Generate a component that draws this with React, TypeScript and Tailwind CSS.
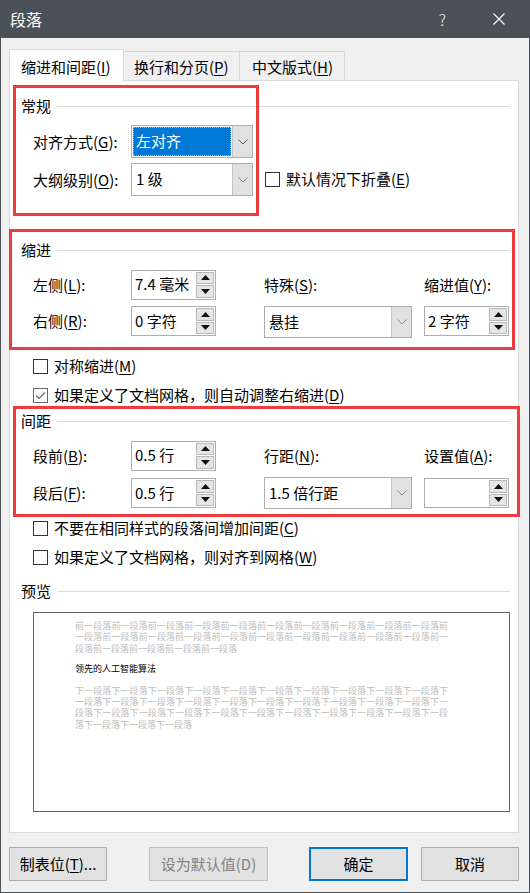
import type { ReactNode } from 'react';

const FONT = "font-['Noto_Sans_CJK_SC','Noto_Sans',sans-serif]";

const PREV_TEXT = '前一段落'.repeat(25);
const NEXT_TEXT = '下一段落'.repeat(34);

function Key({ k }: { k: string }) {
  return <u className="underline-offset-[2px]">{k}</u>;
}

function Chevron({ color = '#555' }: { color?: string }) {
  return (
    <svg width="10" height="6" viewBox="0 0 10 6">
      <path d="M0.5 0.5 L5 5 L9.5 0.5" fill="none" stroke={color} strokeWidth="1" />
    </svg>
  );
}

function Arrow({ up }: { up?: boolean }) {
  return (
    <svg width="9" height="5" viewBox="0 0 9 5">
      {up ? <path d="M0 5 L4.5 0 L9 5 Z" fill="#111" /> : <path d="M0 0 L4.5 5 L9 0 Z" fill="#111" />}
    </svg>
  );
}

function Combo({ value, size, selected }: { value: string; size: string; selected?: boolean }) {
  return (
    <div className={`flex border border-[#adadad] bg-white ${size}`}>
      <div className="flex-1 flex items-center p-[1px]">
        {selected ? (
          <div className="h-full w-full flex items-center bg-[#0078d7] text-white pl-[3px] outline-1 outline-dotted outline-[#f0a040] -outline-offset-1">
            {value}
          </div>
        ) : (
          <span className="pl-[3px]">{value}</span>
        )}
      </div>
      <div className="w-[20px] bg-[#e1e1e1] border-l border-[#c4c4c4] flex items-center justify-center">
        <Chevron color={selected ? '#555' : '#888'} />
      </div>
    </div>
  );
}

function Spin({ value }: { value: string }) {
  return (
    <div className="flex h-[30px] w-[85px] border border-[#adadad] bg-white">
      <div className="flex-1 flex items-center pl-[3px]">{value}</div>
      <div className="w-[19px] flex flex-col gap-px py-px pr-px">
        <div className="flex-1 bg-[#e5e5e5] border border-[#b8b8b8] flex items-center justify-center">
          <Arrow up />
        </div>
        <div className="flex-1 bg-[#e5e5e5] border border-[#b8b8b8] flex items-center justify-center">
          <Arrow />
        </div>
      </div>
    </div>
  );
}

function Check({ checked, children }: { checked?: boolean; children: ReactNode }) {
  return (
    <div className="flex items-center h-[20px]">
      <span
        className={`w-[15px] h-[15px] border bg-white flex items-center justify-center ${
          checked ? 'border-[#6a6a6a]' : 'border-[#333]'
        }`}
      >
        {checked && (
          <svg width="13" height="13" viewBox="0 0 13 13">
            <path d="M2 6.5 L5 9.5 L11 3.5" fill="none" stroke="#666" strokeWidth="1.2" />
          </svg>
        )}
      </span>
      <span className="ml-[6px]">{children}</span>
    </div>
  );
}

function GroupHeader({ title, className = '' }: { title: string; className?: string }) {
  return (
    <div className={`flex items-center h-[20px] pl-[11px] pr-[8px] ${className}`}>
      <span className="leading-[20px]">{title}</span>
      <div className="flex-1 ml-[6px] h-px bg-[#dcdcdc]" />
    </div>
  );
}

function Label({ children, w = 'w-[98px]' }: { children: ReactNode; w?: string }) {
  return <div className={`${w} shrink-0 leading-[20px]`}>{children}</div>;
}

function Button({ children, variant }: { children: ReactNode; variant?: 'default' | 'disabled' }) {
  const border =
    variant === 'default'
      ? 'border-2 border-[#0078d7]'
      : variant === 'disabled'
        ? 'border border-[#bfbfbf] text-[#838383]'
        : 'border border-[#adadad]';
  return <div className={`h-[34px] bg-[#e1e1e1] flex items-center justify-center ${border}`}>{children}</div>;
}

export default function App() {
  return (
    <div className={`relative w-[530px] h-[893px] bg-[#f0f0f0] flex flex-col text-[15px] text-black ${FONT}`}>
      {/* Title bar */}
      <div className="h-[38px] bg-[#4a5157] flex items-center text-white shrink-0">
        <span className="ml-[10px] text-[16px] leading-none">段落</span>
        <span className="ml-auto text-[16px] leading-none font-light text-[#f2f2f2]">?</span>
        <svg className="ml-[47px] mr-[25px]" width="12" height="12" viewBox="0 0 12 12">
          <path d="M0.5 0.5 L11.5 11.5 M11.5 0.5 L0.5 11.5" stroke="#fff" strokeWidth="1.1" />
        </svg>
      </div>

      <div className="flex-1 flex flex-col border-x border-b border-[#4a5157]">
        {/* Tabs */}
        <div className="h-[42px] flex items-end pl-[8px] shrink-0">
          <div className="relative top-px z-10 w-[115px] h-[32px] bg-white border-x border-t border-[#d9d9d9] flex items-center pl-[11px] pt-[3px]">
            缩进和间距(<Key k="I" />)
          </div>
          <div className="w-[116px] h-[29px] border-t border-r border-[#d9d9d9] flex items-center pl-[10px] pt-[2px]">
            换行和分页(<Key k="P" />)
          </div>
          <div className="w-[105px] h-[29px] border-t border-r border-[#d9d9d9] flex items-center pl-[12px] pt-[2px]">
            中文版式(<Key k="H" />)
          </div>
        </div>

        {/* Tab page */}
        <div className="ml-[8px] w-[510px] h-[753px] shrink-0 bg-white border border-[#d9d9d9] flex flex-col">
          <GroupHeader title="常规" className="mt-[15px]" />
          <div className="mt-[9px] pl-[23px] flex items-center">
            <Label>
              对齐方式(<Key k="G" />):
            </Label>
            <Combo value="左对齐" size="w-[122px] h-[33px]" selected />
          </div>
          <div className="mt-[5px] pl-[23px] flex items-center">
            <Label>
              大纲级别(<Key k="O" />):
            </Label>
            <Combo value="1 级" size="w-[122px] h-[33px]" />
            <div className="ml-[12px]">
              <Check>
                默认情况下折叠(<Key k="E" />)
              </Check>
            </div>
          </div>

          <GroupHeader title="缩进" className="mt-[44px]" />
          <div className="mt-[9px] pl-[23px] flex items-center h-[31px]">
            <Label>
              左侧(<Key k="L" />):
            </Label>
            <Spin value="7.4 毫米" />
            <Label w="w-[148px] ml-[48px]">
              特殊(<Key k="S" />):
            </Label>
            <Label w="w-[85px] ml-[12px]">
              缩进值(<Key k="Y" />):
            </Label>
          </div>
          <div className="mt-[6px] pl-[23px] flex items-start h-[32px]">
            <div className="h-[30px] flex items-center">
              <Label>
                右侧(<Key k="R" />):
              </Label>
              <Spin value="0 字符" />
            </div>
            <div className="ml-[48px]">
              <Combo value="悬挂" size="w-[148px] h-[32px]" />
            </div>
            <div className="ml-[12px]">
              <Spin value="2 字符" />
            </div>
          </div>
          <div className="mt-[18px] pl-[23px]">
            <Check>
              对称缩进(<Key k="M" />)
            </Check>
          </div>
          <div className="mt-[9px] pl-[23px]">
            <Check checked>
              如果定义了文档网格，则自动调整右缩进(<Key k="D" />)
            </Check>
          </div>

          <GroupHeader title="间距" className="mt-[6px]" />
          <div className="mt-[9px] pl-[23px] flex items-center h-[31px]">
            <Label>
              段前(<Key k="B" />):
            </Label>
            <Spin value="0.5 行" />
            <Label w="w-[148px] ml-[48px]">
              行距(<Key k="N" />):
            </Label>
            <Label w="w-[85px] ml-[12px]">
              设置值(<Key k="A" />):
            </Label>
          </div>
          <div className="mt-[6px] pl-[23px] flex items-start h-[32px]">
            <div className="h-[30px] mt-px flex items-center">
              <Label>
                段后(<Key k="F" />):
              </Label>
              <Spin value="0.5 行" />
            </div>
            <div className="ml-[48px]">
              <Combo value="1.5 倍行距" size="w-[148px] h-[32px]" />
            </div>
            <div className="ml-[12px] mt-px">
              <Spin value="" />
            </div>
          </div>
          <div className="mt-[9px] pl-[23px]">
            <Check>
              不要在相同样式的段落间增加间距(<Key k="C" />)
            </Check>
          </div>
          <div className="mt-[9px] pl-[23px]">
            <Check>
              如果定义了文档网格，则对齐到网格(<Key k="W" />)
            </Check>
          </div>

          <GroupHeader title="预览" className="mt-[14px]" />
          {/* Preview */}
          <div className="mt-[11px] ml-[23px] w-[477px] h-[200px] border border-[#666] bg-white pt-[7px] pl-[41px] text-[9px] leading-[11.4px]">
            <p className="w-[373px] text-justify text-[#bdbdbd]">{PREV_TEXT}</p>
            <p className="mt-[9px] w-[373px]">领先的人工智能算法</p>
            <p className="mt-[10px] w-[373px] text-justify text-[#bdbdbd]">{NEXT_TEXT}</p>
          </div>
        </div>

        {/* Buttons */}
        <div className="mt-[14px] pl-[8px] flex">
          <div className="w-[98px]">
            <Button>
              制表位(<Key k="T" />)...
            </Button>
          </div>
          <div className="w-[119px] ml-[42px]">
            <Button variant="disabled">设为默认值(D)</Button>
          </div>
          <div className="w-[99px] ml-[41px]">
            <Button variant="default">确定</Button>
          </div>
          <div className="w-[98px] ml-[13px]">
            <Button>取消</Button>
          </div>
        </div>
      </div>

      {/* Red annotation frames */}
      <div className="absolute left-[13px] top-[85px] w-[246px] h-[131px] border-[3px] border-[#ef3b3f]" />
      <div className="absolute left-[9px] top-[229px] w-[506px] h-[121px] border-[3px] border-[#ef3b3f]" />
      <div className="absolute left-[13px] top-[406px] w-[507px] h-[111px] border-[3px] border-[#ef3b3f]" />
    </div>
  );
}
